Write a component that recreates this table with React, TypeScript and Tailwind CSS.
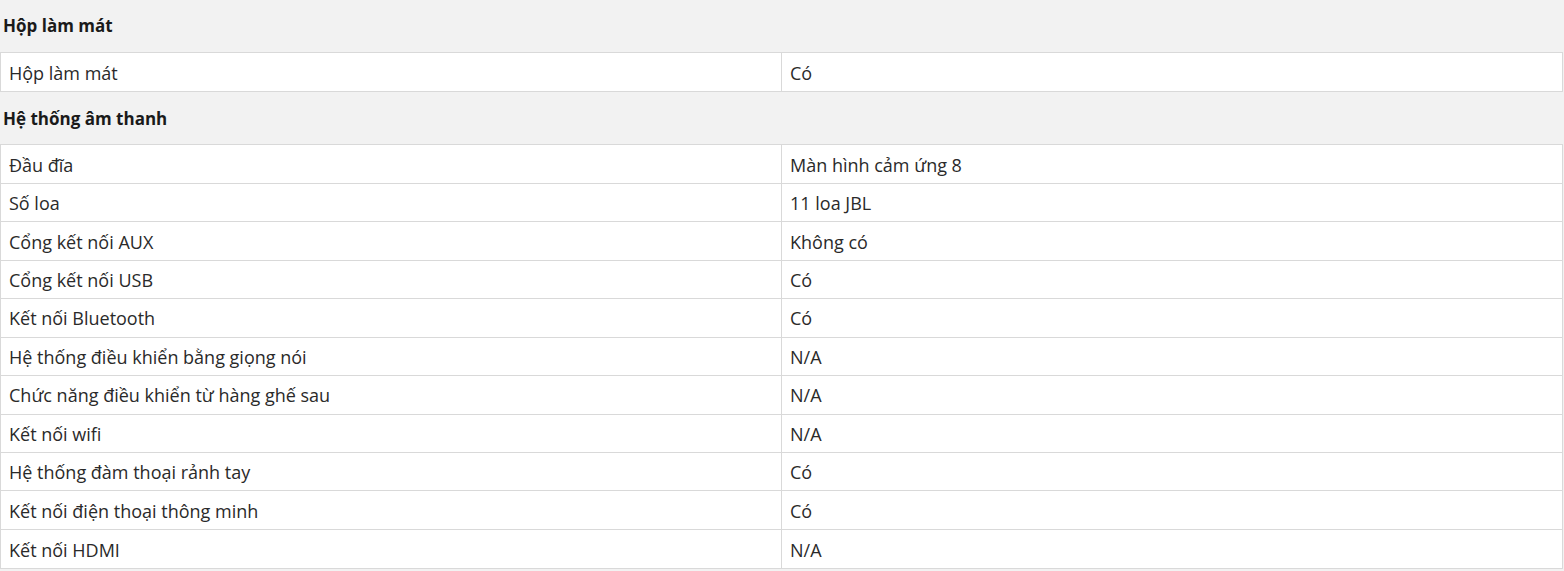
const sections: { title: string; rows: [string, string][] }[] = [
  {
    title: "Hộp làm mát",
    rows: [["Hộp làm mát", "Có"]],
  },
  {
    title: "Hệ thống âm thanh",
    rows: [
      ["Đầu đĩa", "Màn hình cảm ứng 8"],
      ["Số loa", "11 loa JBL"],
      ["Cổng kết nối AUX", "Không có"],
      ["Cổng kết nối USB", "Có"],
      ["Kết nối Bluetooth", "Có"],
      ["Hệ thống điều khiển bằng giọng nói", "N/A"],
      ["Chức năng điều khiển từ hàng ghế sau", "N/A"],
      ["Kết nối wifi", "N/A"],
      ["Hệ thống đàm thoại rảnh tay", "Có"],
      ["Kết nối điện thoại thông minh", "Có"],
      ["Kết nối HDMI", "N/A"],
    ],
  },
];

export default function App() {
  return (
    <div className="min-h-[571px] w-full bg-[#f2f2f2] font-['Open_Sans',sans-serif] text-[18px] text-[#2a2a2a]">
      {sections.map((s) => (
        <section key={s.title}>
          <div className="flex h-[52px] items-center px-[3px] text-[17px] font-bold text-[#1a1a1a]">{s.title}</div>
          <div className="w-[1563px] border border-[#d9d9d9] bg-white">
            {s.rows.map(([k, v], i) => (
              <div
                key={k}
                className={
                  "grid h-[38.45px] grid-cols-[781px_1fr] items-center " +
                  (i < s.rows.length - 1 ? "border-b border-[#d9d9d9]" : "")
                }
              >
                <div className="flex h-full items-center border-r border-[#d9d9d9] pl-[8px] pt-[2px]">{k}</div>
                <div className="pl-[8px] pt-[2px]">{v}</div>
              </div>
            ))}
          </div>
        </section>
      ))}
    </div>
  );
}
